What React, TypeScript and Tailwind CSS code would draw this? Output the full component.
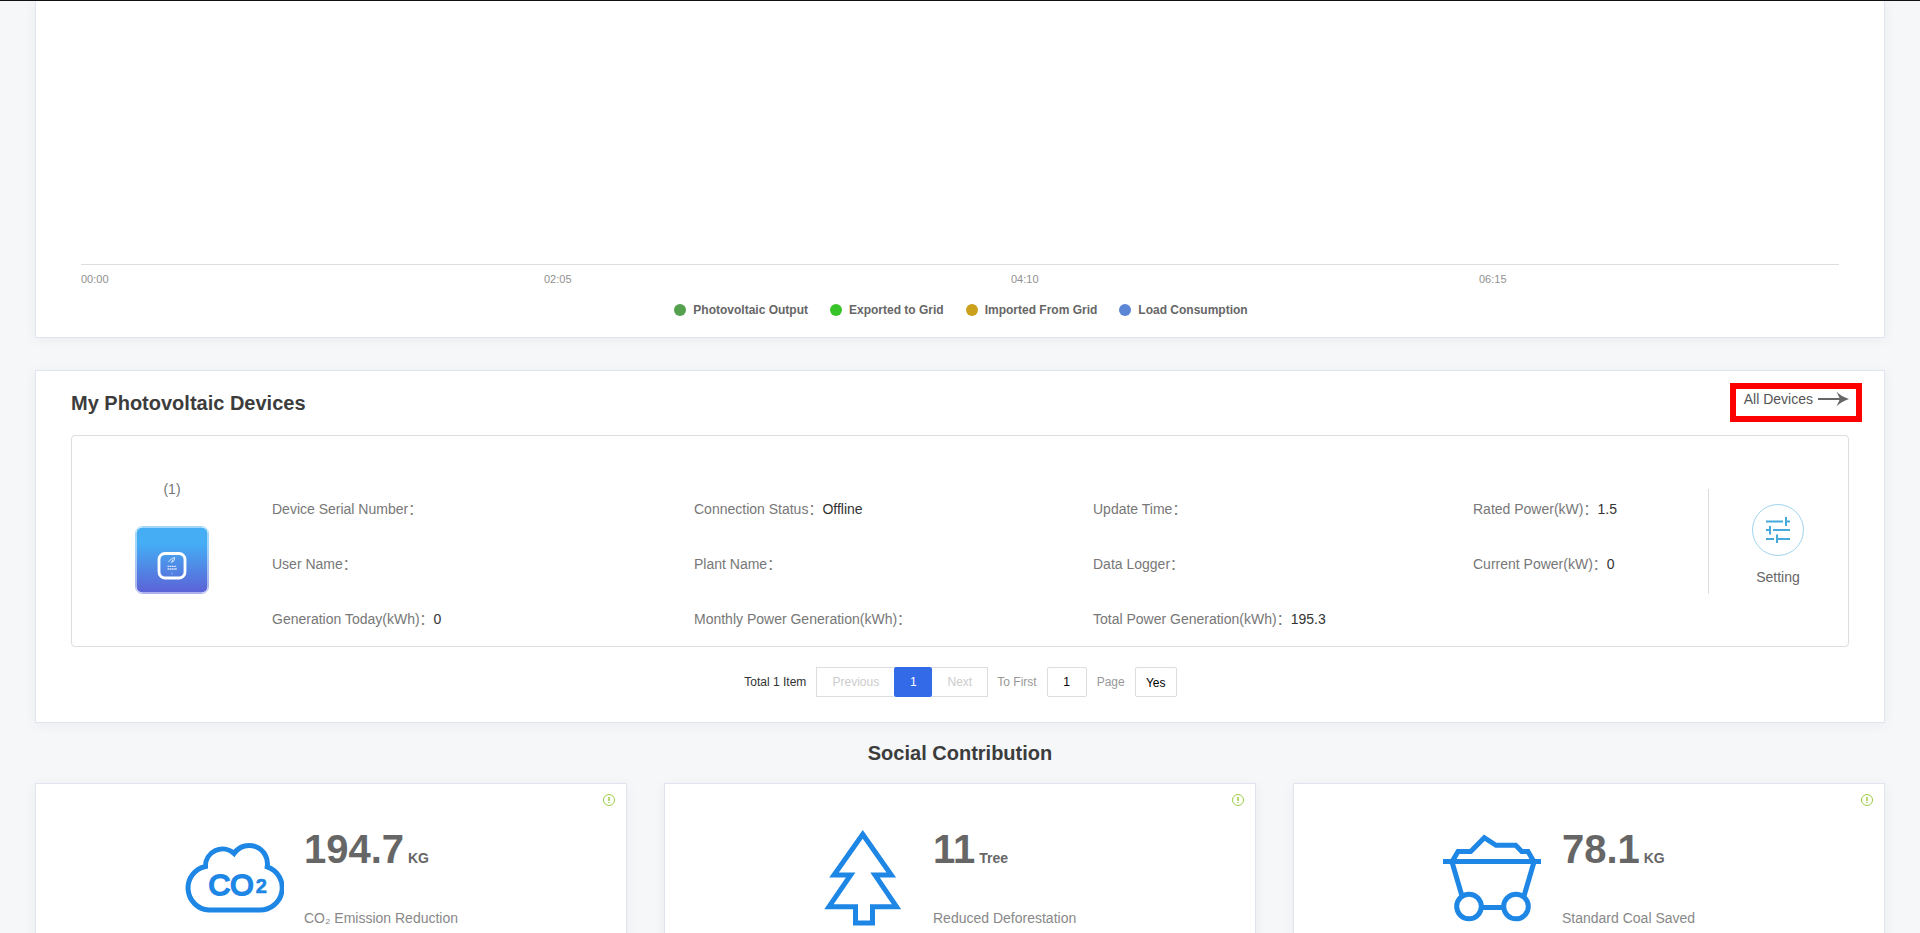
import type { ReactNode } from 'react';

const TICKS = ['00:00', '02:05', '04:10', '06:15'];

const LEGEND = [
  { label: 'Photovoltaic Output', dot: 'bg-[#55a04f]' },
  { label: 'Exported to Grid', dot: 'bg-[#37c428]' },
  { label: 'Imported From Grid', dot: 'bg-[#cba11b]' },
  { label: 'Load Consumption', dot: 'bg-[#5a86d5]' },
];

const FIELDS = [
  { label: 'Device Serial Number', value: '' },
  { label: 'Connection Status', value: 'Offline' },
  { label: 'Update Time', value: '' },
  { label: 'Rated Power(kW)', value: '1.5' },
  { label: 'User Name', value: '' },
  { label: 'Plant Name', value: '' },
  { label: 'Data Logger', value: '' },
  { label: 'Current Power(kW)', value: '0' },
  { label: 'Generation Today(kWh)', value: '0' },
  { label: 'Monthly Power Generation(kWh)', value: '' },
  { label: 'Total Power Generation(kWh)', value: '195.3' },
];

function Co2Icon() {
  return (
    <svg viewBox="0 0 100 100" className="size-[100px] shrink-0" fill="none" stroke="#1e86e5" strokeWidth="5" aria-hidden="true">
      <path d="M25 82A22 22 0 0 1 21.5 38.5A17 17 0 0 1 50 25.5A18.3 18.3 0 0 1 83.2 38.8A22.2 22.2 0 0 1 75.5 82Z" />
      <g fill="#1e86e5">
        <text x="24.5" y="66.5" fontSize="30" strokeWidth="2">CO</text>
        <text x="71.7" y="65" fontSize="20" fontWeight="700" strokeWidth="0.6">2</text>
      </g>
    </svg>
  );
}

function TreeIcon() {
  return (
    <svg viewBox="0 0 100 100" className="size-[100px] shrink-0" fill="none" stroke="#1e86e5" strokeWidth="5" strokeMiterlimit="10" aria-hidden="true">
      <path d="M49.7 6.3L78.3 47H62L83.5 78.7H59.5V95H42.5V78.7H16L37.7 47H21Z" />
    </svg>
  );
}

function CartIcon() {
  return (
    <svg viewBox="0 0 100 100" className="size-[100px] shrink-0" fill="none" stroke="#1e86e5" strokeWidth="5" aria-hidden="true">
      <path d="M1 33.5H99" />
      <path d="M10.5 33L16 23.5H28.7L42.3 9.7L54 17.3H73.7L79.7 23.5H86L91.5 33" />
      <path d="M10.3 35L20 68M91.7 35L82 68M39 79.5H62" />
      <circle cx="27" cy="78.5" r="12.3" />
      <circle cx="74" cy="78.5" r="12.3" />
    </svg>
  );
}

function DeviceIcon() {
  return (
    <svg viewBox="0 0 74 68" className="mt-[27px] h-[68px] w-[74px]" fill="none" aria-hidden="true">
      <defs>
        <linearGradient id="device" x1="0" y1="0" x2="0" y2="1">
          <stop offset="0.25" stopColor="#44adf4" />
          <stop offset="1" stopColor="#5c62d6" />
        </linearGradient>
      </defs>
      <rect x="0.5" y="0.5" width="73" height="67" rx="7" stroke="url(#device)" strokeOpacity="0.5" />
      <rect x="1.5" y="1.5" width="71" height="65" rx="6" fill="url(#device)" />
      <rect x="24" y="27.5" width="26" height="24.5" rx="6" stroke="#fff" strokeWidth="2.8" />
      <path d="M33.5 36C35 33.5 37 32.5 39.5 31.5C40 34 38.5 36 36.5 36.3L38 33.5" stroke="#fff" strokeWidth="0.8" />
      <path d="M32.5 40.3H41.5M32.5 43H42" stroke="#fff" strokeOpacity="0.75" strokeWidth="1.3" strokeDasharray="1.8 0.4" />
      <path d="M37 46.5V48.5" stroke="#fff" strokeOpacity="0.4" />
    </svg>
  );
}

function InfoIcon() {
  return (
    <svg viewBox="0 0 12 12" className="size-3" fill="none" stroke="#9ccc45" aria-hidden="true">
      <circle cx="6" cy="6" r="5.5" />
      <path d="M6 3V7M6 8V9" strokeWidth="1.5" />
    </svg>
  );
}

const STATS: { value: string; unit: string; label: string; icon: ReactNode }[] = [
  { value: '194.7', unit: 'KG', label: 'CO₂ Emission Reduction', icon: <Co2Icon /> },
  { value: '11', unit: 'Tree', label: 'Reduced Deforestation', icon: <TreeIcon /> },
  { value: '78.1', unit: 'KG', label: 'Standard Coal Saved', icon: <CartIcon /> },
];

function ChartCard() {
  return (
    <section className="border border-t-0 border-[#dfe4f0] bg-white px-[45px] pb-[17px] shadow-[0_2px_12px_rgba(0,0,0,0.05)]">
      <div className="h-[264px] border-b border-[#dddddd]" />
      <div className="mt-[6px] grid grid-cols-[463fr_467fr_468fr_360fr] text-[11px] leading-4 text-[#909090]">
        {TICKS.map((t) => (
          <span key={t}>{t}</span>
        ))}
      </div>
      <ul className="mt-[13px] flex justify-center gap-[22px] pl-[2px] text-xs leading-5 font-bold text-[#666666]">
        {LEGEND.map((l) => (
          <li key={l.label} className="flex items-center gap-[7px]">
            <span className={`size-3 rounded-full ${l.dot}`} />
            {l.label}
          </li>
        ))}
      </ul>
    </section>
  );
}

function Pagination() {
  return (
    <nav className="mt-5 flex items-center justify-center pl-px text-xs text-[#999999]">
      <span className="mr-[10px] text-[#333333]">Total 1 Item</span>
      <button disabled className="h-[30px] w-[78px] border border-r-0 border-[#dddddd] text-[#cccccc]">Previous</button>
      <button className="h-[30px] w-[38px] rounded-xs bg-[#336ae8] text-white">1</button>
      <button disabled className="h-[30px] w-14 border border-l-0 border-[#dddddd] text-[#cccccc]">Next</button>
      <label htmlFor="page" className="ml-[9px]">To First</label>
      <input id="page" defaultValue="1" className="ml-[10px] h-[30px] w-10 rounded-xs border border-[#dddddd] text-center text-black" />
      <span className="ml-[10px]">Page</span>
      <button className="ml-[10px] h-[30px] w-[42px] rounded-xs border border-[#dddddd] pt-[2px] text-black">Yes</button>
    </nav>
  );
}

function DevicesCard() {
  return (
    <section className="mt-8 border border-[#dfe4f0] bg-white px-[35px] pt-[18px] pb-[25px] shadow-[0_2px_12px_rgba(0,0,0,0.05)]">
      <div className="flex items-start justify-between">
        <h2 className="mt-[2px] text-xl leading-6 font-bold text-[#3c3c3c]">My Photovoltaic Devices</h2>
        <div className="relative">
          <a href="#devices" className="flex items-center gap-[5px] text-sm leading-5 text-[#555555]">
            All Devices
            <svg viewBox="0 0 31 16" className="h-4 w-[31px]" fill="#666666" aria-hidden="true">
              <path d="M0 7H21.5L18.5 0.5Q23 5.5 31 8Q23 10.5 18.5 15.5L21.5 9H0Z" />
            </svg>
          </a>
          <div className="pointer-events-none absolute -top-[6px] -right-[13px] -bottom-[13px] -left-[14px] border-6 border-[#ff0000]" />
        </div>
      </div>

      <div className="mt-5 flex rounded-sm border border-[#dddddd]">
        <div className="flex w-[200px] shrink-0 flex-col items-center pt-[43px] text-sm leading-5 text-[#777777]">
          <span>(1)</span>
          <DeviceIcon />
        </div>
        <dl className="grid flex-1 grid-cols-[422fr_399fr_380fr_235fr] gap-y-[35px] pt-[63px] pb-[17px] text-sm leading-5">
          {FIELDS.map((f) => (
            <div key={f.label} className="flex h-5">
              <dt className="text-[#777777]">{f.label}：</dt>
              <dd className="text-[#333333]">{f.value}</dd>
            </div>
          ))}
        </dl>
        <div className="mt-[53px] h-[105px] w-[140px] shrink-0 border-l border-[#dddddd] pt-[15px] pr-px">
          <button className="mx-auto flex flex-col items-center gap-[11px] text-sm leading-5 text-[#666666]">
            <svg viewBox="0 0 52 52" className="size-[52px]" fill="none" stroke="#45a9dc" strokeWidth="2" aria-hidden="true">
              <circle cx="26" cy="26" r="25.5" strokeWidth="1" strokeOpacity="0.5" />
              <path d="M14 17.5H31M34 13V22M34 17.5H38M14 26H18M18 22V30.5M21 26H38M14 35H22M25 30.5V39M25 35H38" />
            </svg>
            Setting
          </button>
        </div>
      </div>

      <Pagination />
    </section>
  );
}

export default function App() {
  return (
    <div className="h-screen overflow-hidden border-t border-[#111111] bg-[#f5f7f9] font-['Liberation_Sans','Noto_Sans_CJK_SC',sans-serif]">
      <main className="px-[35px]">
        <ChartCard />
        <DevicesCard />
        <h2 className="mt-[18px] text-center text-xl leading-6 font-bold text-[#3c3c3c]">Social Contribution</h2>
        <div className="mt-[18px] grid grid-cols-3 gap-[37px]">
          {STATS.map((s) => (
            <section
              key={s.label}
              className="relative flex gap-5 border border-[#dfe4f0] bg-white pt-[41px] pb-10 pl-[25%] shadow-[0_2px_12px_rgba(0,0,0,0.05)]"
            >
              <div className="mt-[3px] shrink-0">{s.icon}</div>
              <div>
                <p className="font-bold text-[#666666]">
                  <span className="text-[40px] leading-[48px]">{s.value}</span>
                  <span className="text-sm"> {s.unit}</span>
                </p>
                <p className="mt-[35px] text-sm leading-5 text-[#888888]">{s.label}</p>
              </div>
              <button aria-label={`About ${s.label}`} className="absolute top-[10px] right-[11px]">
                <InfoIcon />
              </button>
            </section>
          ))}
        </div>
      </main>
    </div>
  );
}
